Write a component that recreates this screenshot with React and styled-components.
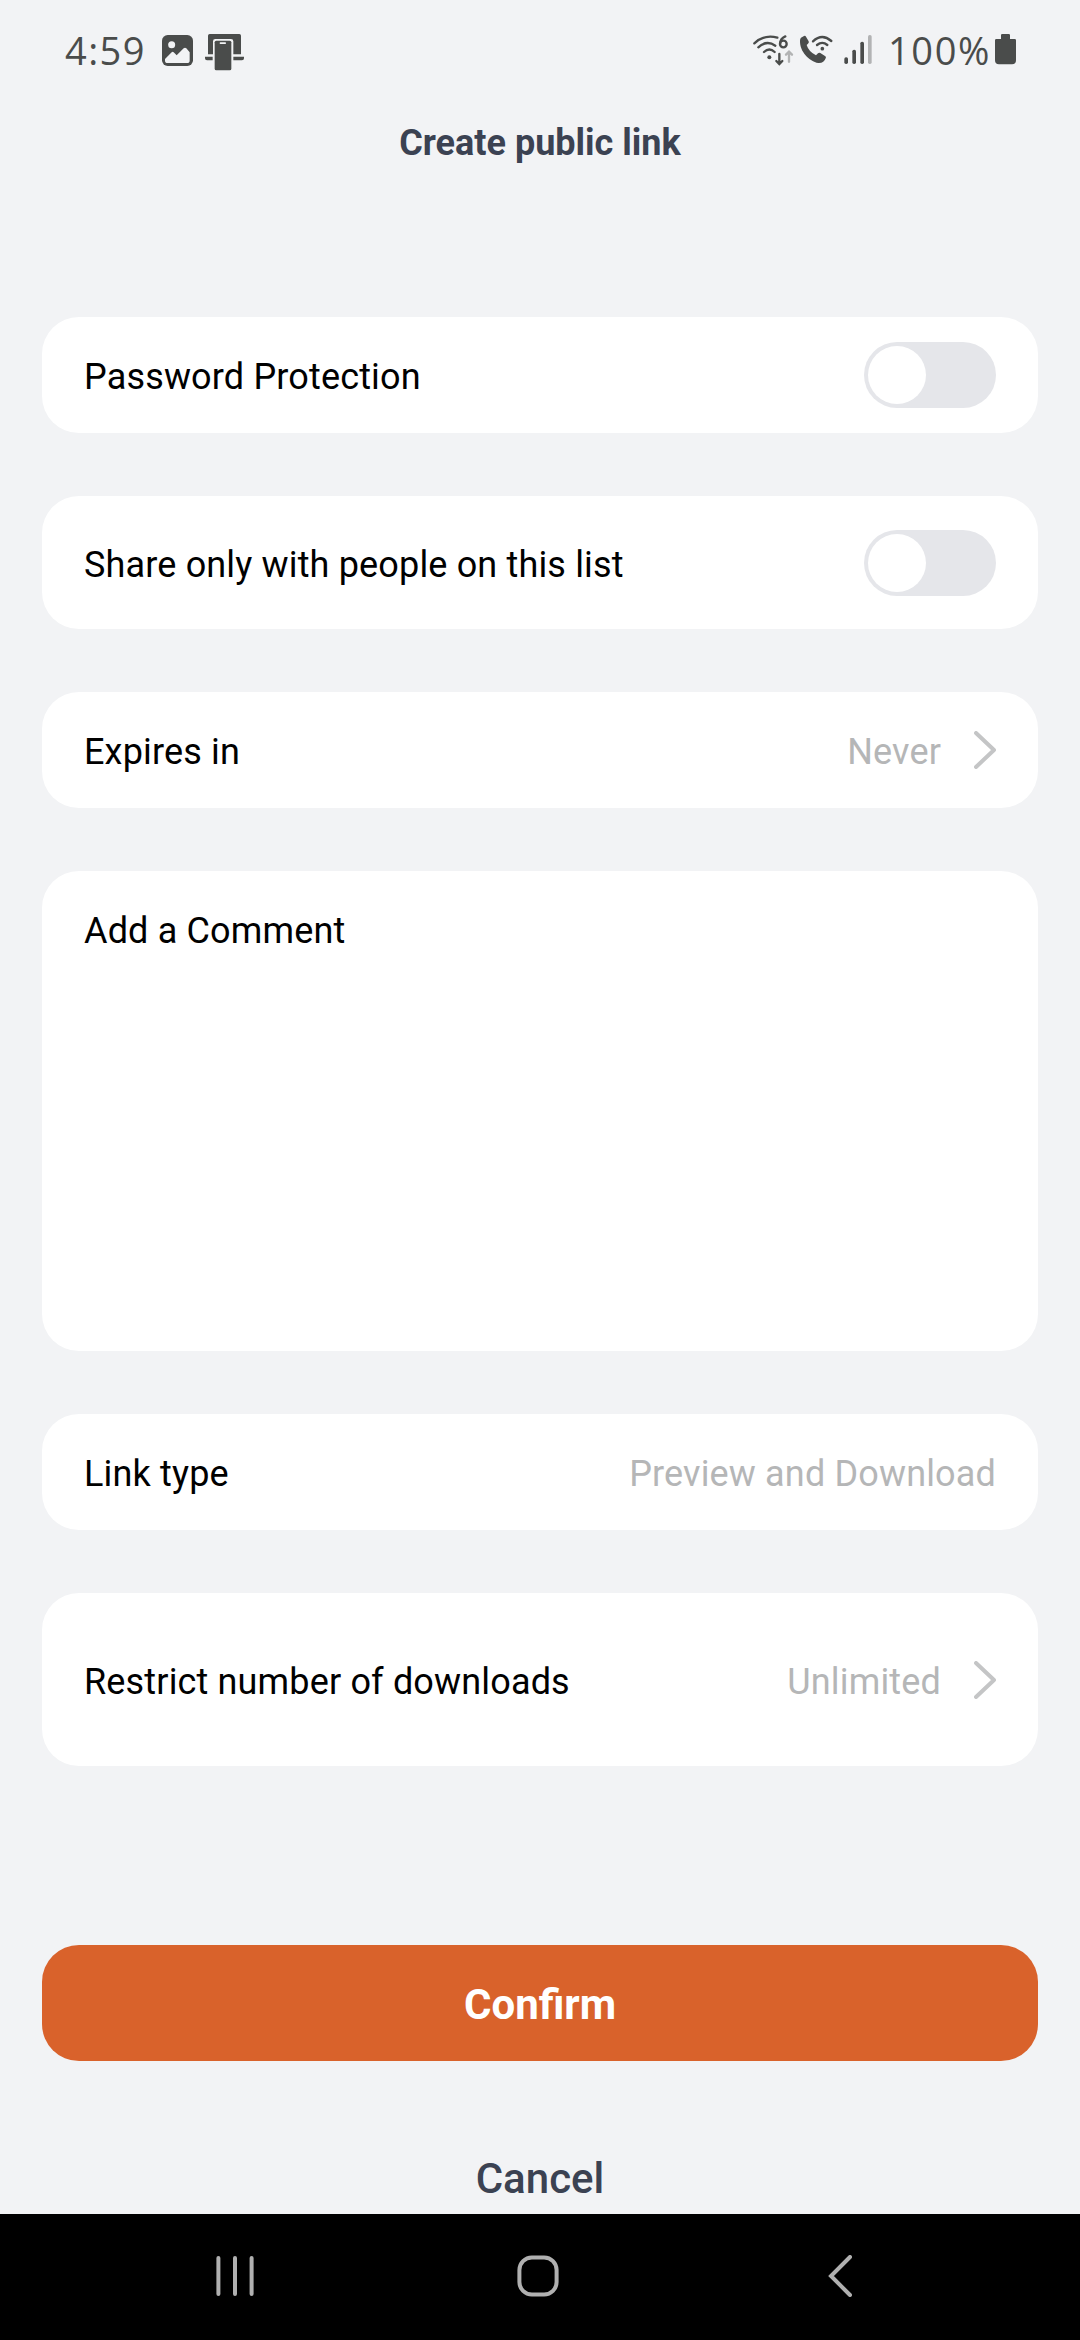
import React, { useState } from "react";
import styled, { createGlobalStyle } from "styled-components";

export default function CreatePublicLink() {
  const [password, setPassword] = useState(false);
  const [restricted, setRestricted] = useState(false);

  return (
    <Screen>
      <GlobalStyle />
      <StatusBar>
        <Clock>4:59</Clock>
        <PictureIcon />
        <DeviceIcon />
        <Spacer />
        <WifiIcon />
        <CallIcon />
        <SignalIcon />
        <BatteryText>100%</BatteryText>
        <BatteryIcon />
      </StatusBar>
      <Title>Create public link</Title>
      <Options>
        <Card>
          <Label>Password Protection</Label>
          <Switch on={password} onToggle={() => setPassword(!password)} />
        </Card>
        <Card $height={133}>
          <Label>Share only with people on this list</Label>
          <Switch on={restricted} onToggle={() => setRestricted(!restricted)} />
        </Card>
        <Card>
          <Label>Expires in</Label>
          <Value>Never</Value>
          <ChevronRight />
        </Card>
        <CommentCard>
          <Label>Add a Comment</Label>
        </CommentCard>
        <Card>
          <Label>Link type</Label>
          <Value>Preview and Download</Value>
        </Card>
        <Card $height={173}>
          <Label>Restrict number of downloads</Label>
          <Value>Unlimited</Value>
          <ChevronRight />
        </Card>
      </Options>
      <Actions>
        <ConfirmButton>Confirm</ConfirmButton>
        <CancelButton>Cancel</CancelButton>
      </Actions>
      <NavBar>
        <NavIcon viewBox="0 0 42 42">
          <path d="M4.4 3v36M21 3v36M37.6 3v36" />
        </NavIcon>
        <NavIcon viewBox="0 0 42 42">
          <rect x="2.4" y="2.4" width="37.2" height="37.2" rx="12.5" />
        </NavIcon>
        <NavIcon viewBox="0 0 42 42">
          <path d="M31 2L12 21l19 19" />
        </NavIcon>
      </NavBar>
    </Screen>
  );
}

const Switch = ({ on, onToggle }) => (
  <Track role="switch" aria-checked={on} $on={on} onClick={onToggle}>
    <Knob />
  </Track>
);

const ChevronRight = () => (
  <Chevron viewBox="0 0 22 38">
    <path d="M2 2l18 17L2 36" />
  </Chevron>
);

// status icons are drawn on a grid of 3 units per pixel
const PictureIcon = () => (
  <StatusIcon viewBox="0 0 99 120" $width={33}>
    <rect x="3" y="12" width="93" height="93" rx="17" />
    <circle cx="32" cy="41" r="10.5" fill="#f2f3f5" />
    <path
      d="M12 84l20-20q3-3 6 0l9 9 21-21q4-4 8 0l10 12v25q0 7-8 7H20q-8 0-8-7z"
      fill="#f2f3f5"
    />
  </StatusIcon>
);

const DeviceIcon = () => (
  <StatusIcon viewBox="0 0 123 120" $width={41} $gap={10}>
    <path d="M12 70V14q0-5 5-5h89q5 0 5 5v56H88V31q0-7-7-7H34q-7 0-7 7v39z" />
    <path d="M3 77h23v11H9q-6 0-6-6zM88 77h32v5q0 6-6 6H88z" />
    <rect x="32" y="29" width="50" height="89" rx="5" />
    <rect x="47" y="34" width="19" height="5" rx="2" fill="#f2f3f5" />
  </StatusIcon>
);

const WifiIcon = () => (
  <StatusIcon viewBox="0 0 126 120" $width={42}>
    <g fill="none" stroke="#4a4c4b" strokeWidth="7" strokeLinecap="round">
      <path d="M7 37Q37 9 76 20" />
      <path d="M19 49Q44 26 70 44" />
      <path d="M36 63Q52 48 68 63" />
      <path d="M100 16Q85 22 84 39" />
      <circle cx="94" cy="39" r="10" />
      <path d="M82 69v29M73 90l9 9 9-9" />
      <path d="M111 92V64M102 71l9-9 9 9" stroke="#b2b3b4" />
    </g>
    <circle cx="52" cy="79" r="6" />
  </StatusIcon>
);

const CallIcon = () => (
  <StatusIcon viewBox="0 0 102 120" $width={34} $gap={5}>
    <path d="M6 20l9-5q4-2 6 2l8 14q2 4-2 7l-4 4q6 20 28 31l6-6q3-3 7-1l14 9q5 3 2 7-5 15-22 14C30 90 2 62 3 29q0-6 3-9z" />
    <g fill="none" stroke="#4a4c4b" strokeWidth="7" strokeLinecap="round">
      <path d="M42 31q27-25 55-1" />
      <path d="M54 42q16-13 31 0" />
    </g>
    <circle cx="70" cy="53" r="5.5" />
  </StatusIcon>
);

const SignalIcon = () => (
  <StatusIcon viewBox="0 0 90 120" $width={30} $gap={10}>
    <rect x="4" y="79" width="11" height="20" rx="5" />
    <rect x="28" y="56" width="11" height="43" rx="5" />
    <rect x="52" y="32" width="11" height="67" rx="5" />
    <rect x="75" y="12" width="11" height="87" rx="5" fill="#b2b3b4" />
  </StatusIcon>
);

const BatteryIcon = () => (
  <StatusIcon viewBox="0 0 69 120" $width={23}>
    <path d="M21 12q0-3 4-3h19q4 0 4 3v12h14q4 0 4 4v60q0 12-12 12H15Q3 100 3 88V28q0-4 4-4h14z" />
  </StatusIcon>
);

const GlobalStyle = createGlobalStyle`
  * {
    box-sizing: border-box;
  }
  body {
    margin: 0;
    background: #f2f3f5;
    font-family: Roboto, sans-serif;
  }
  button {
    border: 0;
    padding: 0;
    font-family: inherit;
  }
`;

const Screen = styled.div`
  display: flex;
  flex-direction: column;
  width: 1080px;
  height: 2340px;
  overflow: hidden;
  background: #f2f3f5;
`;

const StatusBar = styled.div`
  display: flex;
  align-items: center;
  flex: none;
  height: 102px;
  padding: 0 63px 0 65px;
  font-family: "Open Sans", sans-serif;
  font-size: 38px;
  color: #4a4c4b;
`;
const Clock = styled.span`
  width: 96px;
  padding-bottom: 3px;
  letter-spacing: 1.4px;
`;
const Spacer = styled.div`
  flex: 1;
`;
const BatteryText = styled.span`
  width: 121px;
  padding: 0 3px 3px 0;
  text-align: right;
  letter-spacing: 1.6px;
`;
const StatusIcon = styled.svg`
  flex: none;
  width: ${({ $width }) => $width}px;
  height: 40px;
  margin-left: ${({ $gap }) => $gap || 0}px;
  fill: #4a4c4b;
`;

const Title = styled.h1`
  flex: none;
  margin: 0;
  font-size: 36px;
  font-weight: 700;
  line-height: 82px;
  text-align: center;
  color: #3b4252;
`;

const Options = styled.div`
  display: flex;
  flex-direction: column;
  gap: 63px;
  padding: 133px 42px 0;
`;
const Card = styled.div`
  display: flex;
  align-items: center;
  height: ${({ $height }) => $height || 116}px;
  padding: 0 42px;
  border-radius: 37px;
  background: #fff;
`;
const CommentCard = styled(Card)`
  align-items: flex-start;
  height: 480px;
  padding-top: 35px;
`;
const Label = styled.span`
  flex: 1;
  padding-top: 4px;
  font-size: 36px;
  line-height: 42px;
  letter-spacing: 0.16px;
  color: #000;
`;
const Value = styled.span`
  padding-top: 4px;
  font-size: 36px;
  line-height: 42px;
  letter-spacing: 0.16px;
  color: #b5b6b7;
`;
const Chevron = styled.svg`
  width: 22px;
  height: 38px;
  margin-left: 33px;
  fill: none;
  stroke: #c4c5c6;
  stroke-width: 4;
  stroke-linecap: round;
  stroke-linejoin: round;
`;
const Track = styled.button`
  display: flex;
  justify-content: ${({ $on }) => ($on ? "flex-end" : "flex-start")};
  width: 132px;
  height: 66px;
  padding: 4px;
  border-radius: 33px;
  background: ${({ $on }) => ($on ? "#d9622b" : "#e5e6ea")};
`;
const Knob = styled.span`
  width: 58px;
  height: 58px;
  border-radius: 50%;
  background: #fff;
`;

const Actions = styled.div`
  display: flex;
  flex-direction: column;
  flex: 1;
  padding: 179px 42px 0;
`;
const ConfirmButton = styled.button`
  height: 116px;
  padding-top: 2px;
  border-radius: 37px;
  background: #d9622b;
  font-size: 42px;
  font-weight: 700;
  color: #fff;
`;
const CancelButton = styled.button`
  height: 60px;
  margin-top: 87px;
  background: none;
  font-size: 42px;
  font-weight: 500;
  color: #3b4252;
`;

const NavBar = styled.div`
  display: flex;
  align-items: center;
  flex: none;
  gap: 260.5px;
  height: 126px;
  padding: 0 0 2px 214px;
  background: #000;
`;
const NavIcon = styled.svg`
  width: 42px;
  height: 42px;
  fill: none;
  stroke: #b0b0b0;
  stroke-width: 4;
  stroke-linecap: round;
`;
